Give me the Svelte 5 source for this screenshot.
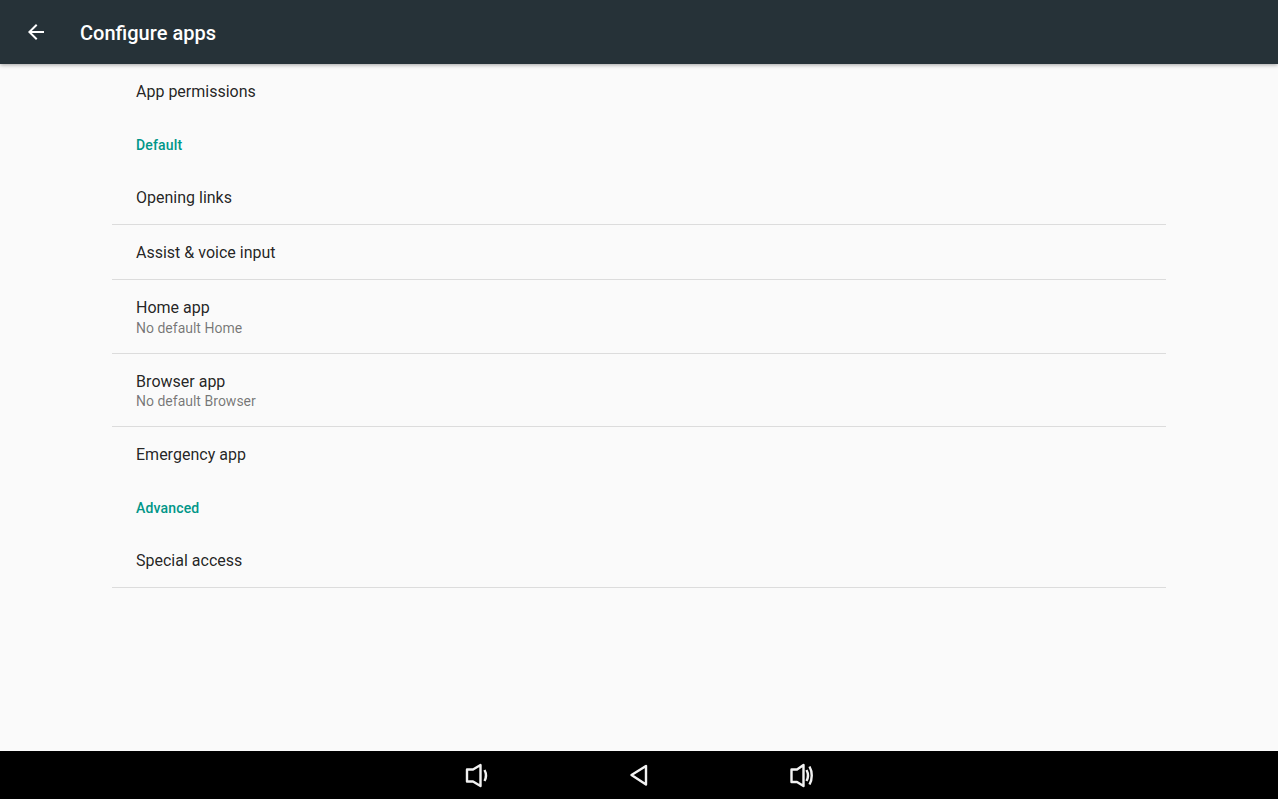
<script>
  const sections = [
    { items: [{ title: 'App permissions', plain: true }] },
    {
      header: 'Default',
      items: [
        { title: 'Opening links' },
        { title: 'Assist & voice input' },
        { title: 'Home app', summary: 'No default Home' },
        { title: 'Browser app', summary: 'No default Browser' },
        { title: 'Emergency app', plain: true }
      ]
    },
    { header: 'Advanced', items: [{ title: 'Special access' }] }
  ];
</script>

<div class="screen">
  <header class="toolbar">
    <svg class="back" width="24" height="24" viewBox="0 0 24 24" aria-hidden="true">
      <path d="M20 11H7.830l5.590-5.590L12 4l-8 8 8 8 1.410-1.410L7.830 13H20v-2z" fill="#fff" />
    </svg>
    <h1>Configure apps</h1>
  </header>

  <main class="list">
    {#each sections as section}
      {#if section.header}
        <div class="category">{section.header}</div>
      {/if}
      {#each section.items as item}
        <div class="row" class:plain={item.plain} class:two-line={item.summary}>
          <div class="title">{item.title}</div>
          {#if item.summary}
            <div class="summary">{item.summary}</div>
          {/if}
        </div>
      {/each}
    {/each}
  </main>

  <nav class="navbar">
    <svg width="32" height="32" viewBox="0 -1 32 32" aria-hidden="true">
      <path d="M7 9.500H13L20.500 5V26L13 21.500H7Z" class="line" />
      <path d="M24.500 10c1.800 3.300 1.800 7.700 0 11" class="line" />
    </svg>
    <svg class="middle" width="32" height="32" viewBox="0 -1 32 32" aria-hidden="true">
      <path d="M7.500 15L22 6V24.500Z" class="line" />
    </svg>
    <svg width="32" height="32" viewBox="0 -1 32 32" aria-hidden="true">
      <path d="M5.500 9.500H11L17.500 5V26L11 22H5.500Z" class="line" />
      <path d="M20.500 10c1.800 3.300 1.800 7.700 0 11" class="line" />
      <path d="M23.500 6.500c3 5.300 3 12.700 0 18" class="line" />
    </svg>
  </nav>
</div>

<style>
  :global(body) {
    margin: 0;
    background: #fafafa;
  }

  .screen {
    height: 799px;
    display: flex;
    flex-direction: column;
    font-family: Roboto, "Liberation Sans", sans-serif;
    font-kerning: none;
    overflow: hidden;
  }

  .toolbar {
    height: 64px;
    flex: none;
    display: flex;
    align-items: center;
    background: #263238;
    box-shadow: 0 1px 4px rgba(0, 0, 0, 0.35);
    position: relative;
    z-index: 1;
  }

  .back {
    margin-left: 24px;
    margin-top: -1px;
  }

  h1 {
    margin: 0 0 0 32px;
    padding-top: 2px;
    font-size: 20px;
    font-weight: 500;
    color: #fff;
  }

  .list {
    flex: 1;
    padding: 0 112px;
  }

  .category {
    height: 52px;
    box-sizing: border-box;
    padding: 2px 24px 0;
    display: flex;
    align-items: center;
    font-size: 14px;
    font-weight: 500;
    letter-spacing: 0.15px;
    color: #009688;
  }

  .row {
    min-height: 54px;
    padding: 0 24px;
    display: flex;
    flex-direction: column;
    justify-content: center;
    border-bottom: 1px solid #dcdcdc;
  }

  .row.plain {
    border-bottom: none;
  }

  .row.two-line {
    min-height: 70px;
    padding-top: 2.5px;
  }

  .title {
    font-size: 16px;
    line-height: 21px;
    color: rgba(0, 0, 0, 0.87);
  }

  .summary {
    margin-top: -0.5px;
    font-size: 14px;
    line-height: 20px;
    color: rgba(0, 0, 0, 0.54);
  }

  .navbar {
    height: 48px;
    flex: none;
    background: #000;
    display: flex;
    align-items: center;
    justify-content: center;
    gap: 130px;
  }

  .middle {
    margin-left: 2px;
  }

  .line {
    fill: none;
    stroke: #f2f2f2;
    stroke-width: 2.400;
    stroke-linejoin: round;
  }
</style>
